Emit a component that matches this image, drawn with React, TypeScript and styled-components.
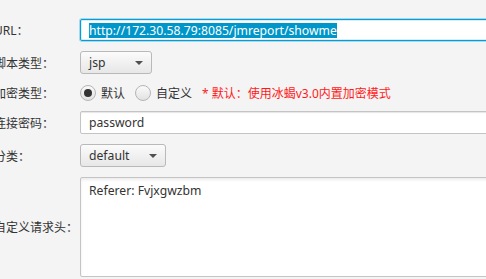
import React from "react";
import styled, { createGlobalStyle } from "styled-components";

const Global = createGlobalStyle`
  html, body { margin: 0; padding: 0; background: #f4f4f4; overflow: hidden; }
  body { font-family: "Noto Sans", "Noto Sans CJK SC", sans-serif; font-size: 12.2px; color: #333; }
`;

const Form = styled.div`
  display: grid;
  grid-template-columns: 86px 420px;
  grid-template-rows: 22px 23px 17px 23px 23px 100px;
  row-gap: 10px;
  margin-left: -6px;
  padding-top: 19px;
  width: 520px;
  height: 279px;
`;

const Label = styled.div`
  display: flex;
  align-items: center;
  font-family: "Noto Sans", "Noto Sans CJK SC", sans-serif;
  font-size: 12px;
  color: #333;
  white-space: nowrap;
`;

const TextField = styled.div<{ $focused?: boolean }>`
  box-sizing: border-box;
  height: 100%;
  background: #fff;
  border: 1px solid ${(p) => (p.$focused ? "#039ed3" : "#c4c4c4")};
  border-radius: 2px;
  box-shadow: ${(p) =>
    p.$focused ? "0 0 0 1px #a7d9ee, inset 0 0 0 1px #d6eef8" : "inset 0 1px 1px #e6e6e6"};
  display: flex;
  align-items: center;
  padding-left: 8px;
  white-space: nowrap;
  overflow: hidden;
`;

const Selected = styled.span`
  background: #0096c9;
  color: #fff;
  line-height: 15px;
  display: inline-block;
`;

const Combo = styled.div<{ $w: number }>`
  box-sizing: border-box;
  width: ${(p) => p.$w}px;
  height: 100%;
  border: 1px solid #b9b9b9;
  border-radius: 3px;
  background: linear-gradient(#fbfbfb, #e7e7e7);
  display: flex;
  align-items: center;
  justify-content: space-between;
  padding: 0 8px 0 8px;
`;

const Arrow = styled.span`
  width: 0;
  height: 0;
  border-left: 4px solid transparent;
  border-right: 4px solid transparent;
  border-top: 4px solid #4f4f4f;
`;

const RadioRow = styled.div`
  display: flex;
  align-items: center;
  font-family: "Noto Sans", "Noto Sans CJK SC", sans-serif;
  font-size: 12px;
`;

const RadioOption = styled.label`
  display: flex;
  align-items: center;
  gap: 5px;
  margin-right: 10px;
`;

const Radio = styled.span<{ $checked?: boolean }>`
  box-sizing: border-box;
  width: 16px;
  height: 16px;
  border-radius: 50%;
  border: 1px solid #b5b5b5;
  background: linear-gradient(#fafafa, #e2e2e2);
  display: flex;
  align-items: center;
  justify-content: center;
  &::after {
    content: "";
    width: 8px;
    height: 8px;
    border-radius: 50%;
    background: ${(p) => (p.$checked ? "#333" : "transparent")};
  }
`;

const Hint = styled.span`
  color: #ff1a1a;
`;

const TextArea = styled.div`
  box-sizing: border-box;
  height: 100%;
  background: #fff;
  border: 1px solid #c4c4c4;
  border-radius: 2px;
  box-shadow: inset 0 2px 3px #ececec;
  padding: 4px 8px;
`;

export default function App() {
  return (
    <>
      <Global />
      <Form>
        <Label>URL：</Label>
        <TextField $focused>
          <Selected>http://172.30.58.79:8085/jmreport/showme</Selected>
        </TextField>

        <Label>脚本类型：</Label>
        <Combo $w={72}>
          <span>jsp</span>
          <Arrow />
        </Combo>

        <Label>加密类型：</Label>
        <RadioRow>
          <RadioOption>
            <Radio $checked />
            默认
          </RadioOption>
          <RadioOption>
            <Radio />
            自定义
          </RadioOption>
          <Hint>* 默认：使用冰蝎v3.0内置加密模式</Hint>
        </RadioRow>

        <Label>连接密码：</Label>
        <TextField>password</TextField>

        <Label>分类：</Label>
        <Combo $w={86}>
          <span>default</span>
          <Arrow />
        </Combo>

        <Label>自定义请求头：</Label>
        <TextArea>Referer: Fvjxgwzbm</TextArea>
      </Form>
    </>
  );
}
